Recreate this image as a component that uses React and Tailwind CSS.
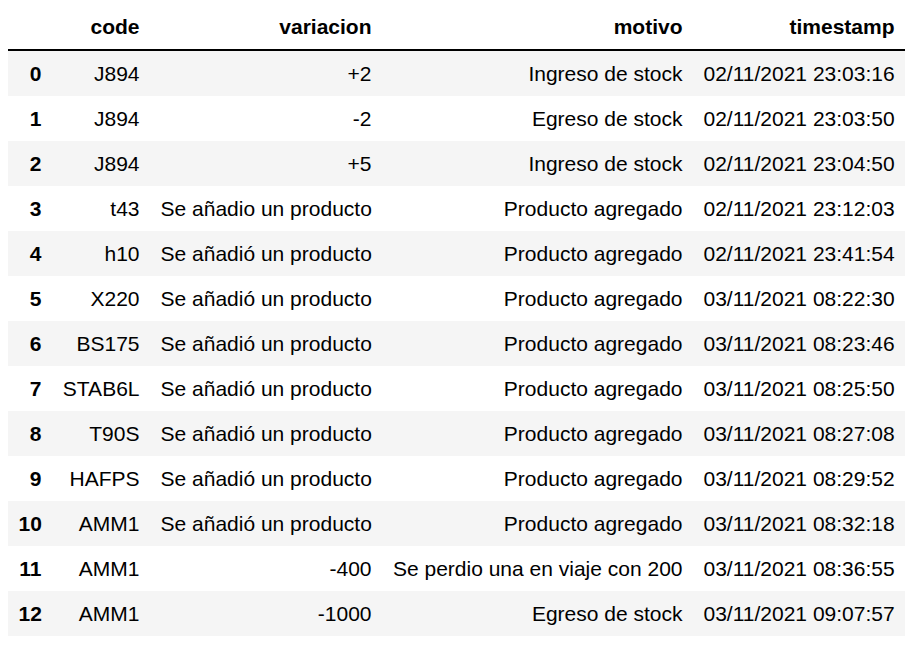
import React from 'react';

const rows = [
    ['J894', '+2', 'Ingreso de stock', '02/11/2021 23:03:16'],
    ['J894', '-2', 'Egreso de stock', '02/11/2021 23:03:50'],
    ['J894', '+5', 'Ingreso de stock', '02/11/2021 23:04:50'],
    ['t43', 'Se añadio un producto', 'Producto agregado', '02/11/2021 23:12:03'],
    ['h10', 'Se añadió un producto', 'Producto agregado', '02/11/2021 23:41:54'],
    ['X220', 'Se añadió un producto', 'Producto agregado', '03/11/2021 08:22:30'],
    ['BS175', 'Se añadió un producto', 'Producto agregado', '03/11/2021 08:23:46'],
    ['STAB6L', 'Se añadió un producto', 'Producto agregado', '03/11/2021 08:25:50'],
    ['T90S', 'Se añadió un producto', 'Producto agregado', '03/11/2021 08:27:08'],
    ['HAFPS', 'Se añadió un producto', 'Producto agregado', '03/11/2021 08:29:52'],
    ['AMM1', 'Se añadió un producto', 'Producto agregado', '03/11/2021 08:32:18'],
    ['AMM1', '-400', 'Se perdio una en viaje con 200', '03/11/2021 08:36:55'],
    ['AMM1', '-1000', 'Egreso de stock', '03/11/2021 09:07:57'],
];

// variacion is text for some rows, numbers are right-aligned like the rest
const isText = (v) => v.startsWith('Se ');

export default function App() {
    return (
        <div className="min-h-[648px] w-[919px] bg-white pt-[4px] pl-[8px] font-['Liberation_Sans',Arial,sans-serif] text-[21px] leading-[24px] text-black">
            <table className="table-fixed border-collapse w-[897px]">
                <colgroup>
                    <col className="w-[44px]" />
                    <col className="w-[98px]" />
                    <col className="w-[232px]" />
                    <col className="w-[311px]" />
                    <col className="w-[212px]" />
                </colgroup>
                <thead className="border-b-2 border-black">
                    <tr>
                        <th className="px-[10.5px] py-[10.5px]"></th>
                        <th className="px-[10.5px] py-[10.5px] text-right font-bold">code</th>
                        <th className="px-[10.5px] py-[10.5px] text-right font-bold">variacion</th>
                        <th className="px-[10.5px] py-[10.5px] text-right font-bold">motivo</th>
                        <th className="px-[10.5px] py-[10.5px] text-right font-bold">timestamp</th>
                    </tr>
                </thead>
                <tbody>
                    {rows.map((r, i) => (
                        <tr key={i} className={i % 2 === 0 ? 'bg-[#f5f5f5]' : 'bg-white'}>
                            <th className="px-[10.5px] py-[10.5px] text-right font-bold">{i}</th>
                            <td className="px-[10.5px] py-[10.5px] text-right whitespace-nowrap">{r[0]}</td>
                            <td className={`px-[10.5px] py-[10.5px] whitespace-nowrap ${isText(r[1]) ? 'text-left' : 'text-right'}`}>{r[1]}</td>
                            <td className="px-[10.5px] py-[10.5px] text-right whitespace-nowrap">{r[2]}</td>
                            <td className="px-[10.5px] py-[10.5px] text-right whitespace-nowrap">{r[3]}</td>
                        </tr>
                    ))}
                </tbody>
            </table>
        </div>
    );
}
